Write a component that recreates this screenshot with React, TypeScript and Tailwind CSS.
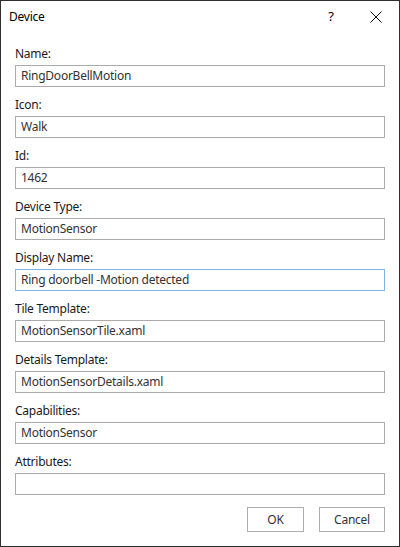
import React from "react";

const fields: { label: string; value: string; focused?: boolean }[] = [
  { label: "Name:", value: "RingDoorBellMotion" },
  { label: "Icon:", value: "Walk" },
  { label: "Id:", value: "1462" },
  { label: "Device Type:", value: "MotionSensor" },
  { label: "Display Name:", value: "Ring doorbell -Motion detected", focused: true },
  { label: "Tile Template:", value: "MotionSensorTile.xaml" },
  { label: "Details Template:", value: "MotionSensorDetails.xaml" },
  { label: "Capabilities:", value: "MotionSensor" },
  { label: "Attributes:", value: "" },
];

export default function App() {
  return (
    <div
      className="w-[400px] h-[547px] bg-white border border-[#2f2f2f] flex flex-col text-[12px] tracking-[-0.25px] text-[#1a1a1a]"
      style={{ fontFamily: '"Noto Sans", "Open Sans", sans-serif' }}
    >
      <div className="h-[31px] flex items-center pl-[8px] shrink-0">
        <span className="flex-1 text-black">Device</span>
        <span className="w-[20px] text-center mr-[29px] text-[13px] text-black">?</span>
        <svg width="12" height="12" viewBox="0 0 12 12" className="mr-[17px]">
          <path d="M0.5 0.5 L11.5 11.5 M11.5 0.5 L0.5 11.5" stroke="#111" strokeWidth="1" />
        </svg>
      </div>
      <div className="flex flex-col px-[14px] pt-[11px]">
        {fields.map((f) => (
          <div key={f.label} className="flex flex-col mb-[7px]">
            <div className="h-[16px] leading-[16px] mt-[3px] mb-[3px]">{f.label}</div>
            <div
              className={
                "h-[22px] border flex items-center px-[5px] text-[#333] " +
                (f.focused ? "border-[#7eb4ea]" : "border-[#ababab]")
              }
            >
              {f.value}
            </div>
          </div>
        ))}
        <div className="flex justify-end gap-[15px] mt-[5px]">
          <button className="w-[57px] h-[25px] border border-[#adadad] bg-white text-[#333] flex items-center justify-center">
            OK
          </button>
          <button className="w-[66px] h-[25px] border border-[#adadad] bg-white text-[#333] flex items-center justify-center">
            Cancel
          </button>
        </div>
      </div>
    </div>
  );
}
